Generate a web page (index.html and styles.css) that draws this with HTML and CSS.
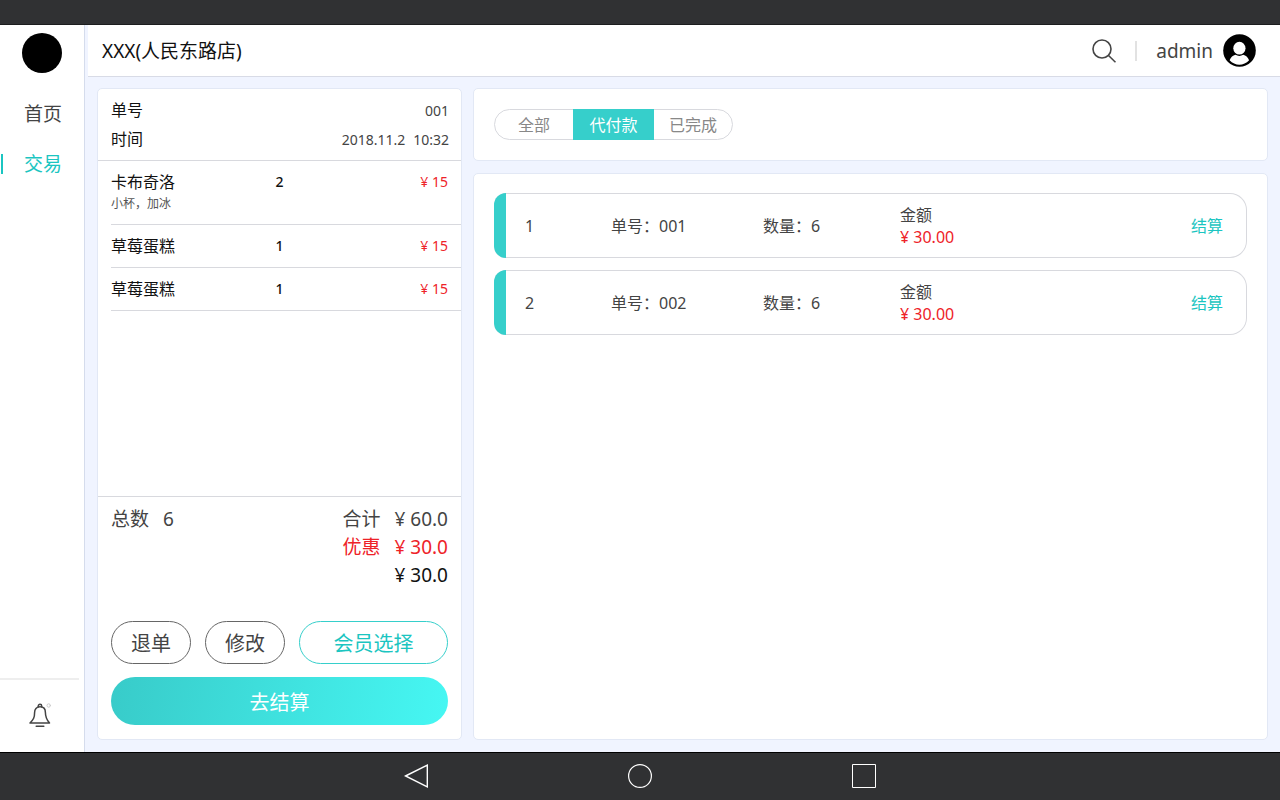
FILE: index.html
```html
<!doctype html>
<html lang="zh-CN">
<head>
    <meta charset="UTF-8">
    <meta name="viewport" content="width=device-width, initial-scale=1.0">
    <title>交易</title>
    <link rel="stylesheet" href="styles.css">
</head>
<body>
<div class="screen">
    <div class="status-bar"></div>
    <div class="app">
        <aside class="sidebar">
            <div class="sidebar__logo"></div>
            <nav class="sidebar__nav">
                <a class="sidebar__link" href="#">首页</a>
                <a class="sidebar__link sidebar__link--active" href="#">交易</a>
            </nav>
            <div class="sidebar__bottom">
                <button class="icon-btn" type="button" aria-label="通知">
                    <svg width="24" height="26" viewBox="0 0 24 26" fill="none" stroke="#444" stroke-width="1.5" stroke-linecap="round" stroke-linejoin="round">
                        <path d="M10.3 4.1V2.900a1.700 1.700 0 0 1 3.400 0v1.200"/>
                        <path d="M12 3.800c-3.600 0-5.400 2.600-5.400 5.600 0 5-1 7-4.600 10.600h19.500c-3.100-3.600-4.100-5.600-4.100-10.600 0-3-1.800-5.600-5.400-5.600z"/>
                        <path d="M8.200 23.200h7.600"/>
                        <circle cx="20.700" cy="2.500" r="1.700" stroke="#ccc" stroke-width="1"/>
                    </svg>
                </button>
            </div>
        </aside>
        <div class="main">
            <header class="header">
                <h1 class="header__title">XXX(人民东路店)</h1>
                <div class="header__user">
                    <button class="icon-btn" type="button" aria-label="搜索">
                        <svg width="24" height="24" viewBox="0 0 24 24" fill="none" stroke="#444" stroke-width="1.600">
                            <circle cx="10" cy="10" r="9"/>
                            <path d="M16.300 16.300l7.200 7"/>
                        </svg>
                    </button>
                    <span class="header__divider"></span>
                    <span class="header__name">admin</span>
                    <svg width="33" height="33" viewBox="0 0 33 33">
                        <circle cx="16.500" cy="16.500" r="16.300"/>
                        <ellipse cx="16.400" cy="14.200" rx="6.100" ry="6.400" fill="#fff"/>
                        <path d="M6.600 26.200c1.200-3 3.300-4.700 5.900-5.400 2.300 1.500 5.400 1.500 7.700 0 2.600.700 4.700 2.400 5.900 5.400-5.300 5.900-14.200 5.900-19.500 0z" fill="#fff"/>
                    </svg>
                </div>
            </header>
            <div class="content">
                <section class="card order">
                    <dl class="order__info">
                        <div class="order__row"><dt>单号</dt><dd>001</dd></div>
                        <div class="order__row"><dt>时间</dt><dd><span>2018.11.2</span><span>10:32</span></dd></div>
                    </dl>
                    <ul class="order__items">
                        <li class="item">
                            <span class="item__name">卡布奇洛</span>
                            <span class="item__count">2</span>
                            <span class="item__price">¥ 15</span>
                            <span class="item__note">小杯，加冰</span>
                        </li>
                        <li class="item">
                            <span class="item__name">草莓蛋糕</span>
                            <span class="item__count">1</span>
                            <span class="item__price">¥ 15</span>
                        </li>
                        <li class="item">
                            <span class="item__name">草莓蛋糕</span>
                            <span class="item__count">1</span>
                            <span class="item__price">¥ 15</span>
                        </li>
                    </ul>
                    <div class="order__footer">
                        <div class="total">
                            <div class="total__line"><span>总数</span><span>6</span></div>
                            <div class="total__sum">
                                <div class="total__line"><span>合计</span><span>¥ 60.0</span></div>
                                <div class="total__line total__line--sale"><span>优惠</span><span>¥ 30.0</span></div>
                                <div class="total__line total__line--pay"><span>¥ 30.0</span></div>
                            </div>
                        </div>
                        <div class="order__buttons">
                            <button class="button" type="button">退单</button>
                            <button class="button" type="button">修改</button>
                            <button class="button button--member" type="button">会员选择</button>
                            <button class="button button--pay" type="button">去结算</button>
                        </div>
                    </div>
                </section>
                <div class="list">
                    <section class="card filter">
                        <div class="tabs">
                            <button class="tabs__tab" type="button">全部</button>
                            <button class="tabs__tab tabs__tab--active" type="button">代付款</button>
                            <button class="tabs__tab" type="button">已完成</button>
                        </div>
                    </section>
                    <section class="card records">
                        <div class="record">
                            <span>1</span>
                            <span>单号：001</span>
                            <span>数量：6</span>
                            <div class="record__amount">金额<br><span class="record__price">¥ 30.00</span></div>
                            <a class="record__link" href="#">结算</a>
                        </div>
                        <div class="record">
                            <span>2</span>
                            <span>单号：002</span>
                            <span>数量：6</span>
                            <div class="record__amount">金额<br><span class="record__price">¥ 30.00</span></div>
                            <a class="record__link" href="#">结算</a>
                        </div>
                    </section>
                </div>
            </div>
        </div>
    </div>
    <div class="nav-bar">
        <button class="icon-btn" type="button" aria-label="返回">
            <svg width="24" height="24" viewBox="0 0 24 24" fill="none" stroke="#fff" stroke-width="1.400"><path d="M1.500 12L23.300 1.200v21.600z"/></svg>
        </button>
        <button class="icon-btn" type="button" aria-label="主页">
            <svg width="24" height="24" viewBox="0 0 24 24" fill="none" stroke="#fff" stroke-width="1.200"><circle cx="12" cy="12" r="11.400"/></svg>
        </button>
        <button class="icon-btn" type="button" aria-label="最近任务">
            <svg width="24" height="24" viewBox="0 0 24 24" fill="none" stroke="#fff"><path d="M.5.5h23v23H.5z"/></svg>
        </button>
    </div>
</div>
</body>
</html>
```
FILE: styles.css
```css
*{box-sizing:border-box}
body{margin:0;font-family:"Noto Sans","Noto Sans CJK SC",sans-serif;font-size:16px;color:#444}
h1,dl,dd,ul{margin:0;padding:0}
ul{list-style:none}
a{text-decoration:none}
button{font:inherit;color:inherit;padding:0;border:0;background:none;cursor:pointer}
svg{display:block}

.screen{display:flex;flex-direction:column;min-height:100vh}
.status-bar{height:25px;background:#303133;border-bottom:1px solid #1c1d1e}
.app{flex:1;display:flex;background:#f0f4ff}
.nav-bar{display:flex;justify-content:center;align-items:center;gap:200px;height:48px;background:#303133;box-shadow:inset 0 1px #000}

.sidebar{display:flex;flex-direction:column;width:85px;padding-top:8px;background:#fff;border-right:1px solid #d5dcec}
.sidebar__logo{width:40px;height:40px;margin:0 22px 16px;border-radius:50%;background:#000}
.sidebar__link{display:flex;align-items:center;gap:21px;height:50px;padding-left:1px;font-size:19px;line-height:24px;color:#444}
.sidebar__link::before{content:"";width:2px;height:20px}
.sidebar__link--active{color:#1bc5c1}
.sidebar__link--active::before{background:#1bc5c1}
.sidebar__bottom{display:flex;justify-content:center;align-items:center;width:79px;height:74px;margin-top:auto;border-top:2px solid #eee}

.main{flex:1;display:flex;flex-direction:column;min-width:0}
.header{display:flex;justify-content:space-between;align-items:center;height:52px;margin-left:3px;padding:0 24px 0 14px;background:#fff;border-bottom:1px solid #d8dbe6}
.header__title{font-size:19px;font-weight:400;line-height:24px;color:#111}
.header__user{display:flex;align-items:center}
.header__divider{width:2px;height:20px;margin:0 19px;background:#e2e2e2}
.header__name{margin-right:10px;font-size:19px;line-height:24px}

.content{flex:1;display:flex;gap:11px;padding:11px 12px 12px}
.card{background:#fff;border:1px solid #e2e8f5;border-radius:5px}

.order{display:flex;flex-direction:column;width:365px}
.order__info{padding:7px 12px 6px 13px;border-bottom:1px solid #d8d9de}
.order__row{display:flex;justify-content:space-between;line-height:29px;color:#111}
.order__row dd{display:flex;gap:8px;font-size:14px;color:#444}
.order__items{flex:1;padding-left:13px}
.item{display:grid;grid-template-columns:1fr 20px 1fr;align-items:center;padding:10px 13px 10px 0;line-height:22px;border-bottom:1px solid #d8d9de;color:#111}
.item__count{font-size:14px;font-weight:500}
.item__count,.record__link{text-align:center}
.item__price{font-size:14px;text-align:right;color:#ee2228}
.item__note{font-size:12px;line-height:21px;color:#555}

.order__footer{padding:8px 13px 14px;border-top:1px solid #d8d9de}
.total{display:flex;justify-content:space-between;font-size:19px;line-height:28px}
.total__line{display:flex;justify-content:flex-end;gap:14px}
.total__line--sale{color:#ee2228}
.total__line--pay{color:#111}
.order__buttons{display:grid;grid-template-columns:80px 80px 1fr;gap:13px 14px;margin-top:32px}
.button{height:43px;border:1px solid #666;border-radius:24px;font-size:20px}
.button--member{border-color:#36cfcb;color:#1bc5c1}
.button--pay{grid-column:1/-1;height:48px;border:0;background:linear-gradient(100deg,#38cbc9,#46f7f3);color:#fff}

.list{flex:1;display:flex;flex-direction:column;gap:12px}
.filter{padding:20px}
.tabs{display:flex;width:max-content;height:31px;border:1px solid #d8d9de;border-radius:16px}
.tabs__tab{width:78px;line-height:22px;color:#888}
.tabs__tab--active{width:81px;margin:-1px 0;background:#36cfcb;color:#fff}
.records{flex:1;display:flex;flex-direction:column;gap:12px;padding:19px 20px}
.record{display:grid;grid-template-columns:31px 86px 152px 137px 1fr auto;align-items:center;height:65px;padding-right:23px;line-height:22px;border:1px solid #d8d9de;border-left:0;border-radius:12px 17px 17px 12px}
.record::before{content:"";align-self:stretch;width:12px;margin:-1px 0;border-radius:12px 0 0 12px;background:#36cfcb}
.record__price{color:#ee2228}
.record__link{color:#1bc5c1}
```
